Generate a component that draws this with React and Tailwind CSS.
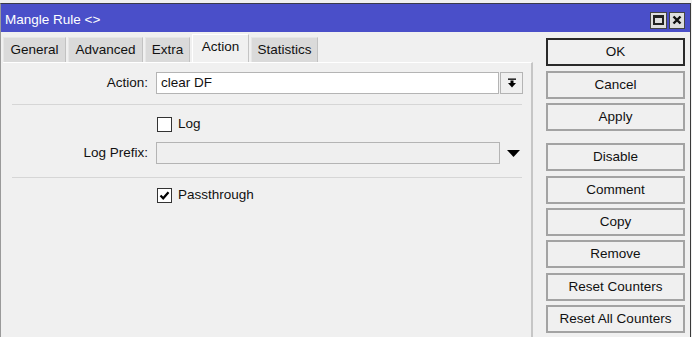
import React from 'react';

const tabs = [
  { name: 'General', w: 'w-[63px]' },
  { name: 'Advanced', w: 'w-[75px]' },
  { name: 'Extra', w: 'w-[45px]' },
  { name: 'Action', w: 'w-[57px]', active: true },
  { name: 'Statistics', w: 'w-[67px]' },
];

const buttons = [
  { label: 'OK', mt: 'mt-0', primary: true },
  { label: 'Cancel', mt: 'mt-[5px]' },
  { label: 'Apply', mt: 'mt-[4px]' },
  { label: 'Disable', mt: 'mt-[12px]' },
  { label: 'Comment', mt: 'mt-[5px]' },
  { label: 'Copy', mt: 'mt-[4px]' },
  { label: 'Remove', mt: 'mt-[4px]' },
  { label: 'Reset Counters', mt: 'mt-[5px]' },
  { label: 'Reset All Counters', mt: 'mt-[4px]' },
];

function Checkbox({ checked }) {
  return (
    <div className="w-[15px] h-[15px] bg-white border border-[#333] flex items-center justify-center">
      {checked && (
        <svg width="11" height="11" viewBox="0 0 11 11">
          <path d="M1.5 5.5 L4.2 8.3 L9.5 2.2" fill="none" stroke="#000" strokeWidth="2.2" />
        </svg>
      )}
    </div>
  );
}

export default function App() {
  return (
    <div className="w-[692px] h-[337px] overflow-hidden bg-[#f0f0f0] pt-[3px] font-['Liberation_Sans',Arial,sans-serif] text-[13.5px] text-[#111]">
      <div className="w-[691px] h-[334px] border-t border-x border-t-[#3a3a4a] border-l-[#9a9a9a] border-r-[#3a3a3a] flex flex-col">
        {/* Title bar */}
        <div className="h-[28px] bg-[#4a4fc9] flex items-center pl-[4px] pr-[5px]">
          <span className="text-white text-[13.5px] mt-[4px]">Mangle Rule &lt;&gt;</span>
          <div className="ml-auto flex gap-[2px] mt-[4px]">
            <div className="w-[17px] h-[17px] bg-[#dedede] border border-[#444] flex items-center justify-center">
              <div className="w-[11px] h-[10px] border-2 border-t-[3px] border-[#222]" />
            </div>
            <div className="w-[16px] h-[17px] bg-[#dedede] border border-[#444] flex items-center justify-center">
              <svg width="10" height="10" viewBox="0 0 10 10">
                <path d="M1.5 1.5 L8.5 8.5 M8.5 1.5 L1.5 8.5" stroke="#111" strokeWidth="2.4" />
              </svg>
            </div>
          </div>
        </div>

        <div className="flex flex-1">
          {/* Left: tabs + panel */}
          <div className="w-[532px] flex flex-col pl-[2px]">
            <div className="h-[30px] pt-[2px] flex items-end gap-[2px]">
              {tabs.map(t =>
                t.active ? (
                  <div key={t.name} className={`${t.w} h-[28px] bg-[#f0f0f0] border-t border-l border-r border-t-white border-l-white border-r-[#c4c4c4] flex items-center justify-center pb-[3px]`}>
                    {t.name}
                  </div>
                ) : (
                  <div key={t.name} className={`${t.w} h-[25px] bg-[#dadada] border-t border-l border-r border-t-[#e6e6e6] border-l-[#e6e6e6] border-r-[#c2c2c2] flex items-center justify-center`}>
                    {t.name}
                  </div>
                )
              )}
            </div>
            <div className="flex-1 border-t border-t-white border-r-2 border-r-[#c6c6c6] pt-[9px]">
              {/* Action */}
              <div className="flex items-center h-[22px]">
                <div className="w-[145px] text-right">Action:</div>
                <div className="ml-[8px] w-[343px] h-[22px] bg-white border border-[#b4b4b4] flex items-center pl-[4px]">clear DF</div>
                <div className="ml-[1px] w-[23px] h-[22px] bg-[#f0f0f0] border border-[#b4b4b4] flex items-center justify-center">
                  <svg width="10" height="10" viewBox="0 0 10 10">
                    <rect x="1" y="0.5" width="8" height="1.3" fill="#000" />
                    <rect x="3.5" y="2.5" width="3" height="3" fill="#000" />
                    <path d="M1 5 L9 5 L5 9.5 Z" fill="#000" />
                  </svg>
                </div>
              </div>
              <div className="ml-[9px] mt-[10px] w-[510px] h-px bg-[#d6d6d6]" />
              {/* Log */}
              <div className="flex items-center mt-[12px] h-[15px]">
                <div className="ml-[154px]"><Checkbox /></div>
                <span className="ml-[6px]">Log</span>
              </div>
              {/* Log Prefix */}
              <div className="flex items-center h-[22px] mt-[10px]">
                <div className="w-[145px] text-right">Log Prefix:</div>
                <div className="ml-[8px] w-[344px] h-[22px] bg-[#efefef] border border-[#b4b4b4]" />
                <svg className="ml-[7px]" width="13" height="7" viewBox="0 0 13 7">
                  <path d="M0 0 L13 0 L6.5 7 Z" fill="#000" />
                </svg>
              </div>
              <div className="ml-[9px] mt-[13px] w-[510px] h-px bg-[#d6d6d6]" />
              {/* Passthrough */}
              <div className="flex items-center mt-[10px] h-[15px]">
                <div className="ml-[154px]"><Checkbox checked /></div>
                <span className="ml-[6px]">Passthrough</span>
              </div>
            </div>
          </div>

          {/* Right: buttons */}
          <div className="flex-1 pl-[13px] pt-[6px] flex flex-col">
            {buttons.map(b => (
              <div
                key={b.label}
                className={`${b.mt} w-[139px] h-[28px] flex items-center justify-center bg-[#f0f0f0] border-2 ${b.primary ? 'border-[#2a2a2a]' : 'border-[#a3a3a3]'}`}
              >
                {b.label}
              </div>
            ))}
          </div>
        </div>
      </div>
    </div>
  );
}
